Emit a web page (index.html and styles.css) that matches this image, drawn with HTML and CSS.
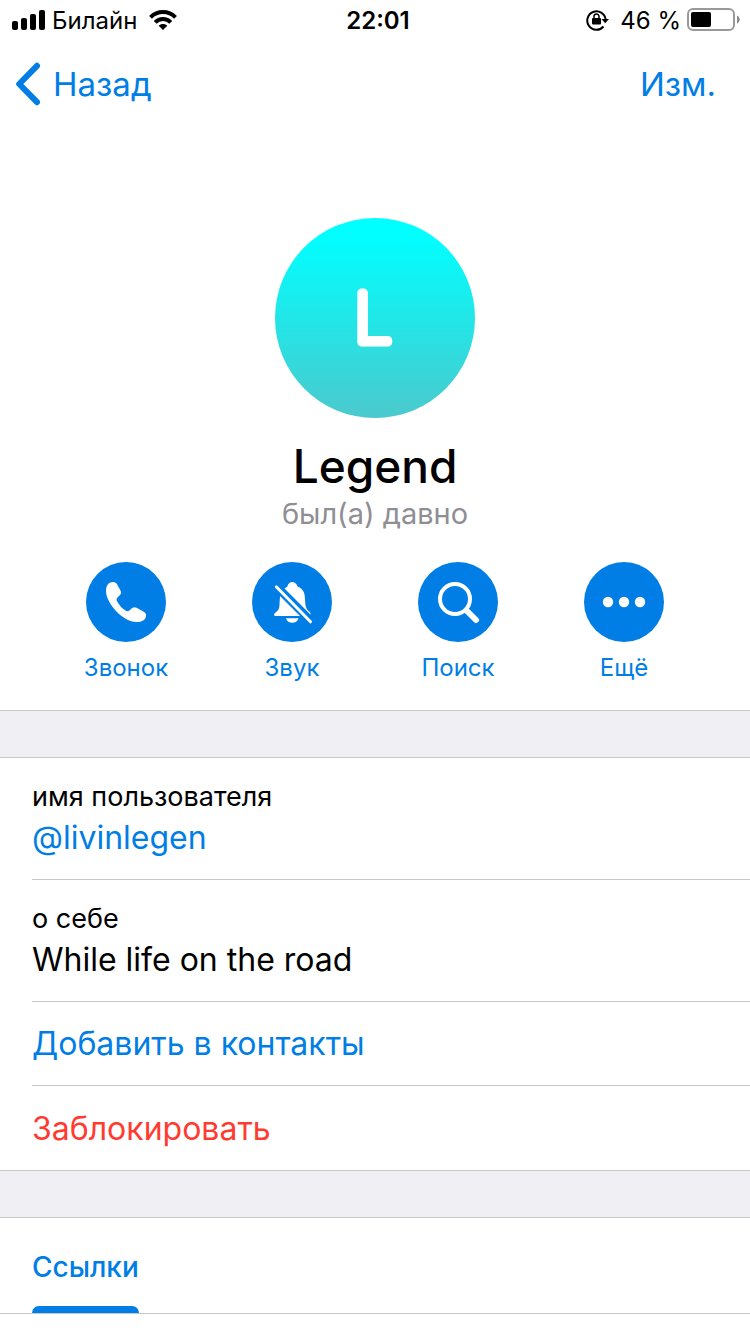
FILE: index.html
```html
<!DOCTYPE html>
<html lang="ru">
<head>
<meta charset="utf-8">
<meta name="viewport" content="width=device-width, initial-scale=1">
<title>Legend</title>
<link rel="stylesheet" href="styles.css">
</head>
<body>
<div class="status">
  <div class="status-side">
    <svg width="34" height="20" viewBox="0 0 34 20" aria-hidden="true"><rect x="0" y="11" width="6" height="9" rx="2"/><rect x="9" y="8" width="6" height="12" rx="2"/><rect x="18" y="4" width="6" height="16" rx="2"/><rect x="27" y="0" width="6" height="20" rx="2"/></svg>
    <span class="carrier">Билайн</span>
    <svg width="28" height="20" viewBox="0 0 28 20" aria-hidden="true"><g fill="none" stroke="#000" stroke-width="4"><path d="M1.5 7.3C8.5.3 19.500 .3 26.500 7.300"/><path d="M6.200 12.300C10.500 8 17.500 8 21.800 12.300"/></g><path d="M14 20l-4.300-4.300c2.300-2.200 6.300-2.200 8.600 0z"/></svg>
  </div>
  <time class="clock">22:01</time>
  <div class="status-side status-end">
    <svg width="24" height="22" viewBox="0 0 24 22" aria-hidden="true"><path d="M17.500 17.500A9.200 9.200 0 1 1 19.600 10.500" fill="none" stroke="#000" stroke-width="2"/><path d="M15.500 10h7.500l-3.800 4.200z"/><rect x="6" y="9" width="9" height="6.500" rx="1"/><path d="M8 9V7.500a2.500 2.500 0 0 1 5 0V9" fill="none" stroke="#000" stroke-width="1.500"/></svg>
    <span class="percent">46 %</span>
    <svg width="53" height="24" viewBox="0 0 53 24" aria-hidden="true"><rect x="1" y="1" width="46" height="21" rx="5" fill="none" stroke="#999" stroke-width="2"/><rect x="4" y="4" width="20" height="15" rx="2"/><path d="M50 7.500c3.600 1.600 3.600 6.600 0 8.200z" fill="#8a8a8a"/></svg>
  </div>
</div>
<nav class="nav">
  <button class="nav-button" type="button">
    <svg width="26" height="44" viewBox="0 0 26 44" aria-hidden="true"><path d="M22 3.800L4.200 22 22 40.200" fill="none" stroke="currentColor" stroke-width="6" stroke-linecap="round" stroke-linejoin="round"/></svg>
    Назад
  </button>
  <button class="nav-button" type="button">Изм.</button>
</nav>
<main>
  <header class="profile">
    <svg class="avatar" width="200" height="200" viewBox="0 0 200 200" role="img" aria-label="L">
      <defs><linearGradient id="sky" x1="0" y1="0" x2="0" y2="1"><stop offset="0" stop-color="#00ffff"/><stop offset=".08" stop-color="#00ffff"/><stop offset="1" stop-color="#4bc9cd"/></linearGradient></defs>
      <circle cx="100" cy="100" r="100" fill="url(#sky)"/>
      <text class="initial" x="98" y="124" text-anchor="middle">L</text>
    </svg>
    <h1 class="name">Legend</h1>
    <p class="seen">был(а) давно</p>
    <div class="actions">
      <button class="action" type="button">
        <svg class="disc" viewBox="0 0 80 80" aria-hidden="true"><path d="M20 29C20 23 23 20 27 20C29.500 20 30.500 21 32 24L34.500 28.500C35.500 31 35 32 33 34C30.500 36.500 30 37 31.200 39.500C33.500 43.500 36 46.200 39.500 48.500C41.500 49.700 42.500 49.500 44.500 47.500C47 45 48.500 44.800 51 46L56.500 49C59.500 50.500 60.500 52 60 54C59.500 58 56 60 50.500 60C37 60 20 41.500 20 29Z"/></svg>
        Звонок
      </button>
      <button class="action" type="button">
        <svg class="disc" viewBox="0 0 80 80" aria-hidden="true"><path d="M28 34L48 54H23.500C21.800 54 21.600 52 23 51C26.500 48.500 27.500 46.500 27.500 42Z"/><path d="M32.500 26.500L35.200 24.800C36 21.800 37.800 20 40.300 20C42.800 20 44.600 21.600 45.500 24.600C50.500 26.800 52.600 30 52.900 35.500C53.200 43 53.800 46.500 56.500 49C58.500 50.500 59 51.500 58.400 52.400Z"/><path d="M34 56.200h12.500c-1.500 6-11 6-12.500 0z"/><path d="M24.300 24.800L58.500 59.800" stroke="#fff" stroke-width="3" stroke-linecap="round"/></svg>
        Звук
      </button>
      <button class="action" type="button">
        <svg class="disc" viewBox="0 0 80 80" aria-hidden="true"><circle cx="37" cy="37" r="15" fill="none" stroke="#fff" stroke-width="4"/><path d="M47.500 47.500L50 50" stroke="#fff" stroke-width="4"/><path d="M50 50L58 58" stroke="#fff" stroke-width="6" stroke-linecap="round"/></svg>
        Поиск
      </button>
      <button class="action" type="button">
        <svg class="disc" viewBox="0 0 80 80" aria-hidden="true"><circle cx="24" cy="40" r="5.200"/><circle cx="40" cy="40" r="5.200"/><circle cx="56" cy="40" r="5.200"/></svg>
        Ещё
      </button>
    </div>
  </header>
  <section class="details">
    <div class="row field">
      <span class="caption">имя пользователя</span>
      <a class="value link" href="#username">@livinlegen</a>
    </div>
    <div class="row field">
      <span class="caption">о себе</span>
      <span class="value">While life on the road</span>
    </div>
    <button class="row command" type="button">Добавить в контакты</button>
    <button class="row command danger" type="button">Заблокировать</button>
  </section>
  <div class="tabs" role="tablist">
    <button class="tab" type="button" role="tab" aria-selected="true">Ссылки</button>
  </div>
</main>
</body>
</html>
```
FILE: styles.css
```css
* {
  box-sizing: border-box;
}

body {
  margin: 0;
  background: #fff;
  color: #000;
  font-family: Inter, "Noto Sans", sans-serif;
  font-size: 32px;
}

button {
  border: 0;
  padding: 0;
  background: none;
  color: #007ee5;
  font: inherit;
  cursor: pointer;
}

svg {
  flex: none;
}

.status {
  display: grid;
  grid-template-columns: 1fr auto 1fr;
  align-items: center;
  height: 40px;
  padding: 0 6px 0 12px;
  font-size: 24px;
}

.status-side {
  display: flex;
  align-items: center;
  gap: 6px;
}

.carrier {
  margin-right: 6px;
}

.status-end {
  justify-content: flex-end;
  padding-right: 4px;
}

.percent {
  margin-left: 4px;
}

.clock {
  font-weight: 600;
}

.nav {
  display: flex;
  align-items: center;
  justify-content: space-between;
  height: 88px;
  padding: 0 34px 0 15px;
  font-size: 33px;
}

.nav-button {
  display: flex;
  align-items: center;
  gap: 12px;
}

main {
  display: flex;
  flex-direction: column;
  gap: 46px;
  background: #efeff4;
}

.profile,
.details,
.tabs {
  border-bottom: 1px solid #c8c7cc;
  background: #fff;
}

.details,
.tabs {
  border-top: 1px solid #c8c7cc;
}

.profile {
  display: flex;
  flex-direction: column;
  align-items: center;
  padding: 90px 0 26px;
}

.initial {
  fill: #fff;
  stroke: #fff;
  stroke-width: 9px;
  stroke-linejoin: round;
  font-size: 67px;
  font-weight: 100;
}

.name {
  margin: 20px 0 0;
  font-size: 46px;
  font-weight: 500;
  line-height: 56px;
}

.seen {
  margin: 0;
  color: #8e8e93;
  font-size: 29px;
  line-height: 40px;
}

.actions {
  display: flex;
  justify-content: center;
  gap: 16px;
  margin-top: 28px;
}

.action {
  display: flex;
  flex-direction: column;
  align-items: center;
  gap: 10px;
  width: 150px;
  font-size: 24px;
  line-height: 32px;
}

.disc {
  width: 80px;
  height: 80px;
  border-radius: 50%;
  background: #007ee5;
  fill: #fff;
}

.details {
  padding-left: 32px;
}

.row {
  display: block;
  width: 100%;
  border-bottom: 1px solid #c8c7cc;
}

.row:last-child {
  border-bottom: 0;
}

.field {
  display: flex;
  flex-direction: column;
  align-items: flex-start;
  padding: 21px 32px 18px 0;
}

.caption {
  font-size: 27px;
  line-height: 36px;
}

.value {
  line-height: 46px;
}

.link {
  color: #007ee5;
  text-decoration: none;
}

.command {
  height: 84px;
  text-align: left;
}

.danger {
  color: #ff3b30;
}

.tabs {
  display: flex;
  padding: 0 32px;
}

.tab {
  display: flex;
  flex-direction: column;
  gap: 22px;
  padding-top: 32px;
  font-size: 28px;
  font-weight: 500;
  line-height: 34px;
}

.tab::after {
  content: "";
  width: 100%;
  height: 7px;
  border-radius: 7px 7px 0 0;
  background: #007ee5;
}
```
